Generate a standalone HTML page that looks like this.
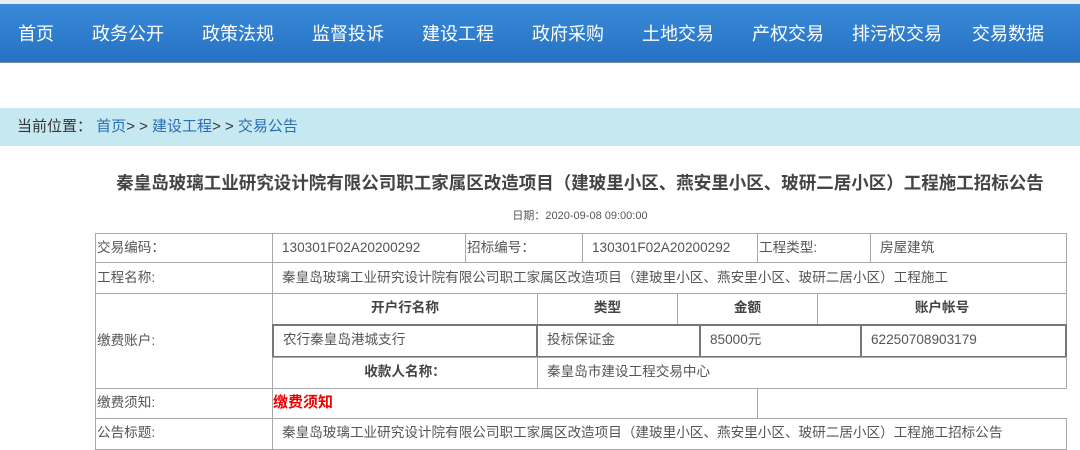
<!DOCTYPE html>
<html><head><meta charset="utf-8"><style>
*{margin:0;padding:0;box-sizing:border-box}
body{width:1080px;height:450px;overflow:hidden;background:#fff;font-family:"Liberation Sans","Noto Sans CJK SC",sans-serif;position:relative}
.nav{position:absolute;left:0;top:4px;width:1080px;height:59px;background:linear-gradient(#3a8ad8,#2672c4);border-bottom:1px solid #7a8ea8;box-shadow:0 -4px 0 #e8ecf0}
.nav span{position:absolute;top:18px;color:#fff;font-size:18px;line-height:24px;white-space:nowrap}
.bc{position:absolute;left:0;top:108px;width:1080px;height:38px;background:#c6e9f1;font-size:15px;line-height:38px;padding-left:17px;color:#333}
.bc a{color:#2b6cb3;text-decoration:none}
.title{position:absolute;left:0;width:1160px;top:171px;text-align:center;font-size:17.5px;font-weight:bold;color:#444;line-height:24px}
.date{position:absolute;left:0;width:1160px;top:207px;text-align:center;font-size:11px;color:#555}
.c{position:absolute;border:1px solid #a8a8a8;font-size:13.6px;color:#555;line-height:28px;padding-left:9px;white-space:nowrap;overflow:hidden}
.l{padding-left:1px}
.h{font-weight:bold;text-align:center;padding-left:0;color:#444}
.t{border:2px solid #777}
</style></head><body>
<div class="nav">
<span style="left:18px">首页</span><span style="left:92px">政务公开</span><span style="left:202px">政策法规</span><span style="left:312px">监督投诉</span><span style="left:422px">建设工程</span><span style="left:532px">政府采购</span><span style="left:642px">土地交易</span><span style="left:752px">产权交易</span><span style="left:852px">排污权交易</span><span style="left:972px">交易数据</span>
</div>
<div class="bc">当前位置：&nbsp;<a>首页</a>&gt; &gt; <a>建设工程</a>&gt; &gt; <a>交易公告</a></div>
<div class="title">秦皇岛玻璃工业研究设计院有限公司职工家属区改造项目（建玻里小区、燕安里小区、玻研二居小区）工程施工招标公告</div>
<div class="date">日期：2020-09-08 09:00:00</div>

<div class="c l" style="left:95px;top:233px;width:178px;height:30px">交易编码：</div>
<div class="c" style="left:272px;top:233px;width:194px;height:30px">130301F02A20200292</div>
<div class="c l" style="left:465px;top:233px;width:118px;height:30px">招标编号：</div>
<div class="c" style="left:582px;top:233px;width:176px;height:30px">130301F02A20200292</div>
<div class="c l" style="left:757px;top:233px;width:114px;height:30px">工程类型:</div>
<div class="c" style="left:870px;top:233px;width:197px;height:30px">房屋建筑</div>

<div class="c l" style="left:95px;top:262px;width:178px;height:32px;line-height:30px">工程名称:</div>
<div class="c" style="left:272px;top:262px;width:795px;height:32px;line-height:30px">秦皇岛玻璃工业研究设计院有限公司职工家属区改造项目（建玻里小区、燕安里小区、玻研二居小区）工程施工</div>

<div class="c l" style="left:95px;top:293px;width:178px;height:96px;line-height:94px">缴费账户:</div>
<div class="c h" style="left:272px;top:293px;width:266px;height:32px">开户行名称</div>
<div class="c h" style="left:537px;top:293px;width:141px;height:32px">类型</div>
<div class="c h" style="left:677px;top:293px;width:141px;height:32px">金额</div>
<div class="c h" style="left:817px;top:293px;width:250px;height:32px">账户帐号</div>
<div class="c t" style="left:272px;top:324px;width:266px;height:34px">农行秦皇岛港城支行</div>
<div class="c t" style="left:536px;top:324px;width:165px;height:34px">投标保证金</div>
<div class="c t" style="left:699px;top:324px;width:163px;height:34px">85000元</div>
<div class="c t" style="left:860px;top:324px;width:207px;height:34px">62250708903179</div>
<div class="c h" style="left:272px;top:357px;width:266px;height:32px">收款人名称：</div>
<div class="c" style="left:537px;top:357px;width:530px;height:32px">秦皇岛市建设工程交易中心</div>

<div class="c l" style="left:95px;top:388px;width:178px;height:31px">缴费须知:</div>
<div class="c" style="left:272px;top:388px;width:486px;height:31px;padding-left:0;color:#e00;font-weight:bold;font-size:15px">缴费须知</div>

<div class="c l" style="left:95px;top:418px;width:178px;height:32px">公告标题:</div>
<div class="c" style="left:272px;top:418px;width:795px;height:32px">秦皇岛玻璃工业研究设计院有限公司职工家属区改造项目（建玻里小区、燕安里小区、玻研二居小区）工程施工招标公告</div>
</body></html>
